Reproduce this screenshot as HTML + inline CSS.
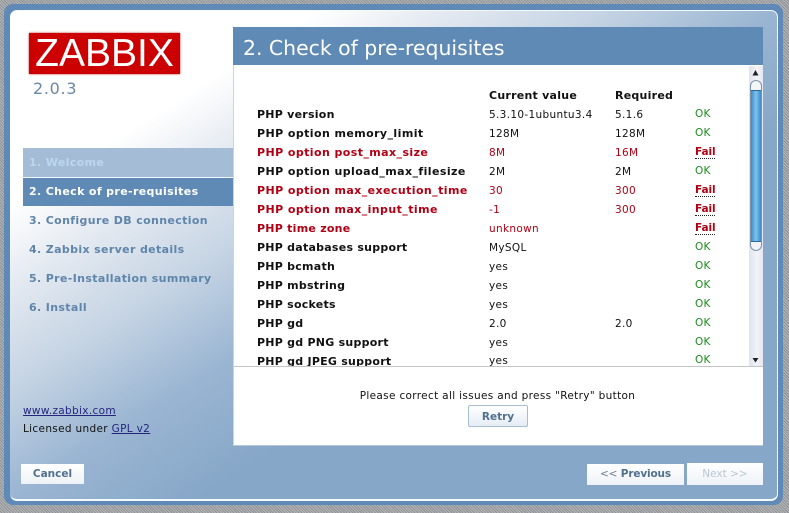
<!DOCTYPE html>
<html><head><meta charset="utf-8"><style>
html,body{margin:0;padding:0;width:789px;height:513px;overflow:hidden}
body{position:relative;font-family:"DejaVu Sans",Verdana,sans-serif;font-size:10.5px;color:#111;
background:repeating-linear-gradient(45deg,#b4b4b4 0 1px,#8f9398 1px 2px)}
div{position:absolute;box-sizing:border-box;white-space:nowrap}
#frame{left:4px;top:4px;width:779px;height:501px;background:#5f8ab8;border-radius:9px}
#panel{left:10px;top:10px;width:768px;height:491px;border-radius:7px;border:1px solid #f4f9fc;border-width:1px 1px 2px 0;
background:linear-gradient(to bottom right,#fff 0,#fff 20%,#e2e8f0 29%,#c4d3e3 39%,#9ab5d2 50%,#87a7c8 62%,#87a7c8 100%)}
#logo{left:29px;top:33px;width:151px;height:41px;background:#cc0000;box-shadow:0 0 2px #a33;color:#fff;font-family:"Liberation Sans",sans-serif;font-size:39px;line-height:41px;text-align:center}
#ver{left:33px;top:79px;font-family:"DejaVu Sans",sans-serif;font-size:16px;color:#6b87a3;line-height:20px;letter-spacing:.7px}
.nav{left:23px;width:210px;height:28px;line-height:28px;padding-left:6px;font-weight:bold;font-size:11px;color:#5f85ab;letter-spacing:.36px}
#head{left:233px;top:27px;width:530px;height:38px;background:#5f8ab6;color:#fff;font-size:20.4px;line-height:43px;padding-left:10px}
#white{left:233px;top:65px;width:530px;height:381px;background:#fff;border-bottom:1px solid #b9c6d4;border-left:1px solid #c8d5e2}
#sep{left:234px;top:366px;width:529px;height:1px;background:#c4c4c4}
#sb{left:749px;top:66px;width:14px;height:300px;background:linear-gradient(90deg,#dfe3ee,#f3f4f9 60%,#e4e6ef)}
#thumb{left:750px;top:80px;width:12px;height:171px;border:1px solid #7b93a8;border-radius:6px 6px 6px 6px;background:linear-gradient(180deg,#f4f5f7 0,#f4f5f7 9px,#2c6a9c 9px,#2c6a9c 10px,transparent 10px),linear-gradient(90deg,#3f8cc6,#7cc2ee 50%,#3d8ac6)}
#thumbend{left:751px;top:241px;width:10px;height:9px;background:#f2f3f6;border-top:1px solid #2c6a9c;border-radius:0 0 5px 5px}
.t{height:15px;line-height:15px;font-size:10.5px;letter-spacing:.33px}
.b{font-weight:bold;font-size:11px;letter-spacing:.25px}
.o{letter-spacing:.42px}
.r{color:#b00014}
.ok{color:#1d8c1d;left:695px;letter-spacing:.2px}
.f{color:#b00014;left:695px;font-weight:bold;height:14px;line-height:14px;border-bottom:1px dotted #222;font-size:10.5px;letter-spacing:-.1px}
.c1{left:257px}.c2{left:489px}.c3{left:615px}
.c2:not(.b),.c3:not(.b){margin-top:1px}
a{color:#25257d;text-decoration:underline}
.btn{background:linear-gradient(180deg,#fff,#eef2f7);color:#51708f;font-weight:bold;font-size:10.5px;text-align:center}
</style></head><body>
<div id="frame"></div>
<div id="panel"></div>
<div id="logo">ZABBIX</div>
<div id="ver">2.0.3</div>

<div class="nav" style="top:148px;height:29px;line-height:30px;background:#a4bcd5;color:#bcd7ec">1. Welcome</div>
<div class="nav" style="top:177px;background:#5f8ab6;color:#fff;border-top:1px solid #eef4f9;height:29px">2. Check of pre-requisites</div>
<div class="nav" style="top:207px">3. Configure DB connection</div>
<div class="nav" style="top:236px">4. Zabbix server details</div>
<div class="nav" style="top:265px">5. Pre-Installation summary</div>
<div class="nav" style="top:294px">6. Install</div>

<div class="t" style="left:23px;top:404px"><a>www.zabbix.com</a></div>
<div class="t" style="left:23px;top:422px">Licensed under <a>GPL v2</a></div>

<div id="head">2. Check of pre-requisites</div>
<div id="white"></div>
<div id="sep"></div>

<div class="t b c2" style="top:88px">Current value</div>
<div class="t b c3" style="top:88px">Required</div>

<div class="t b c1" style="top:107px">PHP version</div><div class="t c2" style="top:107px">5.3.10-1ubuntu3.4</div><div class="t c3" style="top:107px">5.1.6</div><div class="t ok" style="top:107px">OK</div>
<div class="t b o c1" style="top:126px">PHP option memory_limit</div><div class="t c2" style="top:126px">128M</div><div class="t c3" style="top:126px">128M</div><div class="t ok" style="top:126px">OK</div>
<div class="t b o c1 r" style="top:145px">PHP option post_max_size</div><div class="t c2 r" style="top:145px">8M</div><div class="t c3 r" style="top:145px">16M</div><div class="f" style="top:145px">Fail</div>
<div class="t b o c1" style="top:164px">PHP option upload_max_filesize</div><div class="t c2" style="top:164px">2M</div><div class="t c3" style="top:164px">2M</div><div class="t ok" style="top:164px">OK</div>
<div class="t b o c1 r" style="top:183px">PHP option max_execution_time</div><div class="t c2 r" style="top:183px">30</div><div class="t c3 r" style="top:183px">300</div><div class="f" style="top:183px">Fail</div>
<div class="t b o c1 r" style="top:202px">PHP option max_input_time</div><div class="t c2 r" style="top:202px">-1</div><div class="t c3 r" style="top:202px">300</div><div class="f" style="top:202px">Fail</div>
<div class="t b c1 r" style="top:221px">PHP time zone</div><div class="t c2 r" style="top:221px">unknown</div><div class="f" style="top:221px">Fail</div>
<div class="t b c1" style="top:240px">PHP databases support</div><div class="t c2" style="top:240px">MySQL</div><div class="t ok" style="top:240px">OK</div>
<div class="t b c1" style="top:259px">PHP bcmath</div><div class="t c2" style="top:259px">yes</div><div class="t ok" style="top:259px">OK</div>
<div class="t b c1" style="top:278px">PHP mbstring</div><div class="t c2" style="top:278px">yes</div><div class="t ok" style="top:278px">OK</div>
<div class="t b c1" style="top:297px">PHP sockets</div><div class="t c2" style="top:297px">yes</div><div class="t ok" style="top:297px">OK</div>
<div class="t b c1" style="top:316px">PHP gd</div><div class="t c2" style="top:316px">2.0</div><div class="t c3" style="top:316px">2.0</div><div class="t ok" style="top:316px">OK</div>
<div class="t b c1" style="top:335px">PHP gd PNG support</div><div class="t c2" style="top:335px">yes</div><div class="t ok" style="top:335px">OK</div>
<div style="left:234px;top:350px;width:515px;height:16px;overflow:hidden">
<div class="t b" style="left:23px;top:4px">PHP gd JPEG support</div><div class="t" style="left:255px;top:4px">yes</div><div class="t ok" style="left:461px;top:3px">OK</div>
</div>

<div id="sb"></div>
<svg style="position:absolute;left:749px;top:66px" width="14" height="300"><path d="M3.500 9.500L6.500 4L9.500 9.500Z" fill="#222"/><path d="M3.500 292L6.500 296.500L9.500 292Z" fill="#222"/></svg>
<div id="thumb"></div>
<div id="thumbend"></div>

<div class="t" style="left:233px;width:529px;top:389px;text-align:center">Please correct all issues and press "Retry" button</div>
<div class="btn" style="left:468px;top:405px;width:60px;height:22px;line-height:22px;border:1px solid #a8bdd0;border-radius:2px;background:linear-gradient(180deg,#fff,#e6edf5)">Retry</div>

<div class="btn" style="left:21px;top:464px;width:63px;height:20px;line-height:21px">Cancel</div>
<div class="btn" style="left:587px;top:464px;width:97px;height:21px;line-height:21px;letter-spacing:-.15px"><span style="font-weight:normal;color:#6c7f92">&lt;&lt;</span> Previous</div>
<div class="btn" style="left:687px;top:463px;width:76px;height:22px;line-height:22px;color:#b9c7d5;font-weight:normal">Next &gt;&gt;</div>
</body></html>
